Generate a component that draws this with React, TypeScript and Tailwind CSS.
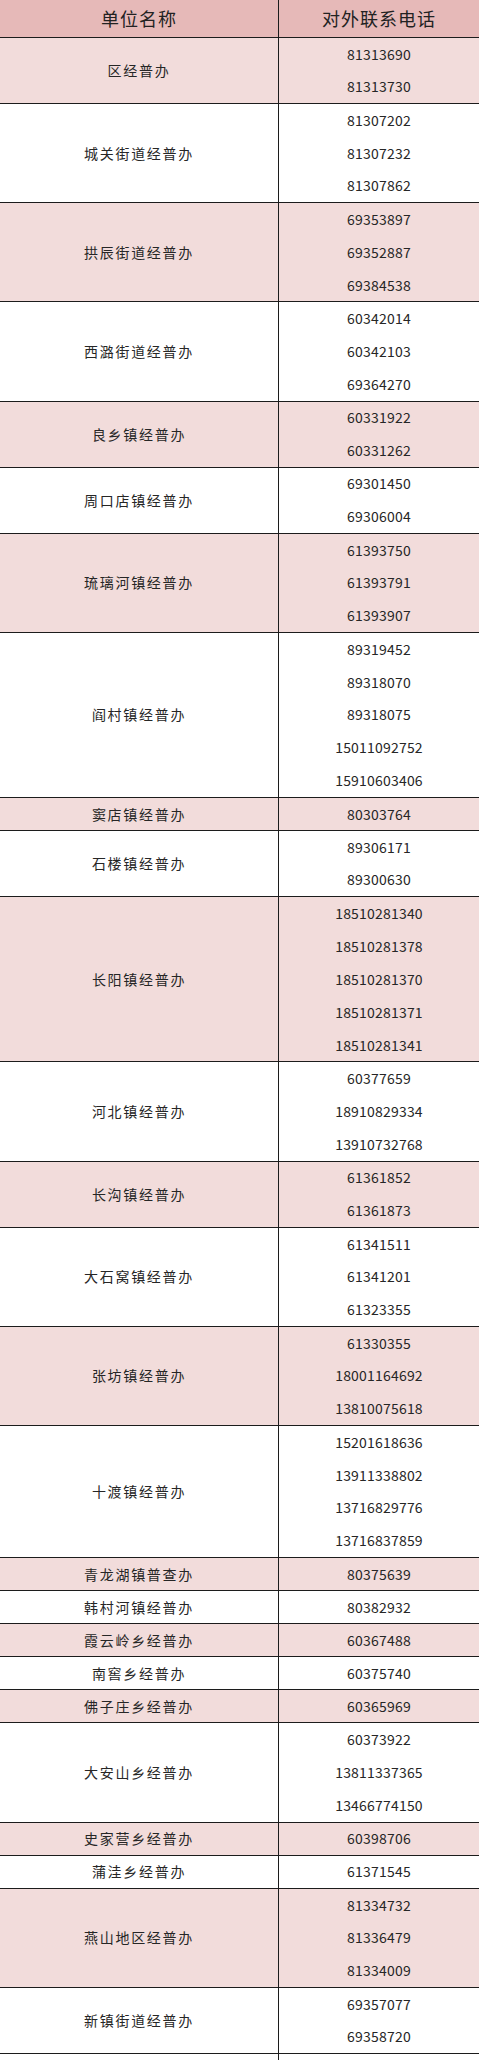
const rows: { name: string; phones: string[] }[] = [
  { name: "区经普办", phones: ["81313690", "81313730"] },
  { name: "城关街道经普办", phones: ["81307202", "81307232", "81307862"] },
  { name: "拱辰街道经普办", phones: ["69353897", "69352887", "69384538"] },
  { name: "西潞街道经普办", phones: ["60342014", "60342103", "69364270"] },
  { name: "良乡镇经普办", phones: ["60331922", "60331262"] },
  { name: "周口店镇经普办", phones: ["69301450", "69306004"] },
  { name: "琉璃河镇经普办", phones: ["61393750", "61393791", "61393907"] },
  { name: "阎村镇经普办", phones: ["89319452", "89318070", "89318075", "15011092752", "15910603406"] },
  { name: "窦店镇经普办", phones: ["80303764"] },
  { name: "石楼镇经普办", phones: ["89306171", "89300630"] },
  { name: "长阳镇经普办", phones: ["18510281340", "18510281378", "18510281370", "18510281371", "18510281341"] },
  { name: "河北镇经普办", phones: ["60377659", "18910829334", "13910732768"] },
  { name: "长沟镇经普办", phones: ["61361852", "61361873"] },
  { name: "大石窝镇经普办", phones: ["61341511", "61341201", "61323355"] },
  { name: "张坊镇经普办", phones: ["61330355", "18001164692", "13810075618"] },
  { name: "十渡镇经普办", phones: ["15201618636", "13911338802", "13716829776", "13716837859"] },
  { name: "青龙湖镇普查办", phones: ["80375639"] },
  { name: "韩村河镇经普办", phones: ["80382932"] },
  { name: "霞云岭乡经普办", phones: ["60367488"] },
  { name: "南窖乡经普办", phones: ["60375740"] },
  { name: "佛子庄乡经普办", phones: ["60365969"] },
  { name: "大安山乡经普办", phones: ["60373922", "13811337365", "13466774150"] },
  { name: "史家营乡经普办", phones: ["60398706"] },
  { name: "蒲洼乡经普办", phones: ["61371545"] },
  { name: "燕山地区经普办", phones: ["81334732", "81336479", "81334009"] },
  { name: "新镇街道经普办", phones: ["69357077", "69358720"] },
];

const LINE = 33.05;

export default function App() {
  return (
    <div
      className="w-[481px] min-h-[2060px] bg-white text-[#262626] overflow-hidden"
      style={{ fontFamily: '"Noto Sans CJK SC", "Noto Sans", sans-serif' }}
    >
      <div className="w-[479px]">
        {/* header */}
        <div className="flex h-[38px] bg-[#e6b9b8] border-b-[1.5px] border-[#1c1c1c]">
          <div className="w-[279px] shrink-0 flex items-center justify-center border-r-[1.5px] border-[#1c1c1c] text-[18px] tracking-[1px] text-[#222]">
            单位名称
          </div>
          <div className="flex-1 flex items-center justify-center text-[18px] tracking-[1px] text-[#222]">
            对外联系电话
          </div>
        </div>

        {rows.map((r, i) => (
          <div
            key={r.name}
            className={`flex border-b-[1.5px] border-[#1c1c1c] ${i % 2 === 0 ? "bg-[#f2dcdb]" : "bg-white"}`}
            style={{ height: `${r.phones.length * LINE}px` }}
          >
            <div className="w-[279px] shrink-0 flex items-center justify-center border-r-[1.5px] border-[#1c1c1c] text-[14px] tracking-[1.7px]">
              {r.name}
            </div>
            <div className="flex-1 flex flex-col">
              {r.phones.map((p) => (
                <div key={p} className="flex-1 flex items-center justify-center text-[14px] tracking-[0.2px]">
                  {p}
                </div>
              ))}
            </div>
          </div>
        ))}

        {/* next row, cut off */}
        <div className="flex h-[20px]">
          <div className="w-[279px] shrink-0 border-r-[1.5px] border-[#1c1c1c]" />
          <div className="flex-1" />
        </div>
      </div>
    </div>
  );
}
